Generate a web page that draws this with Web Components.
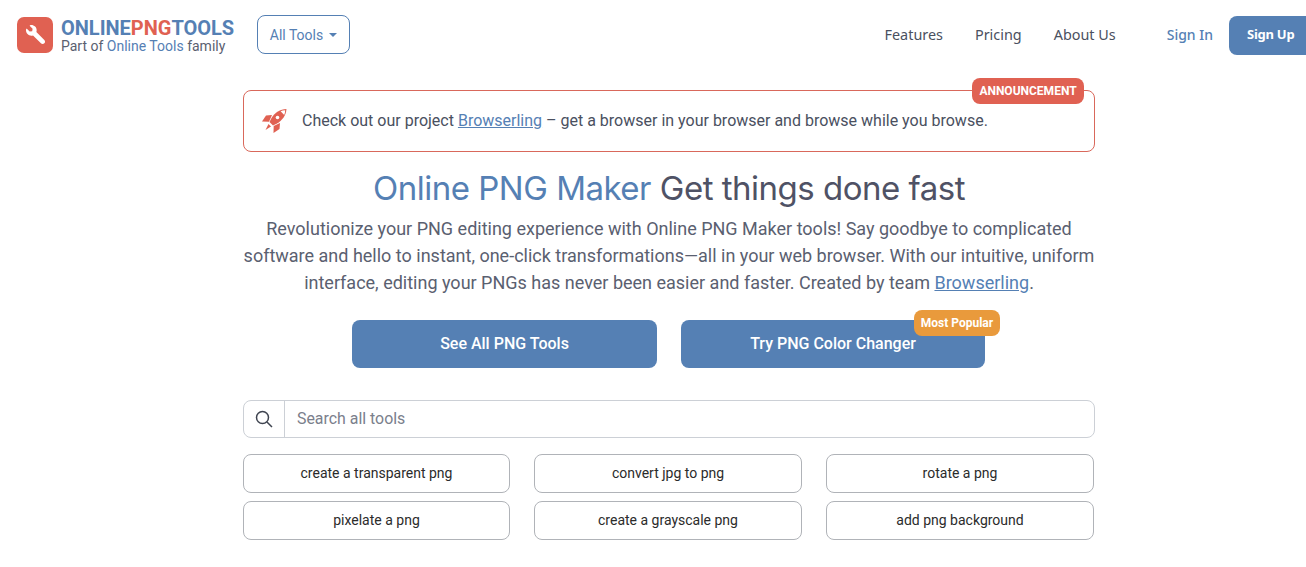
<!DOCTYPE html>
<html lang="en">
<head>
<meta charset="utf-8">
<title>Online PNG Maker</title>
<style>
  html, body { margin: 0; background: #fff; }
  body { font-family: Roboto, "Liberation Sans", sans-serif; color: #4a5060; }
</style>
</head>
<body>
<site-header></site-header>
<main-column>
  <announce-box></announce-box>
  <hero-text></hero-text>
  <hero-actions></hero-actions>
  <search-bar></search-bar>
  <tool-grid>
    <tool-link>create a transparent png</tool-link>
    <tool-link>convert jpg to png</tool-link>
    <tool-link>rotate a png</tool-link>
    <tool-link>pixelate a png</tool-link>
    <tool-link>create a grayscale png</tool-link>
    <tool-link>add png background</tool-link>
  </tool-grid>
</main-column>

<script>
  // small helper so each element only has to hand over its markup
  class Base extends HTMLElement {
    connectedCallback() {
      if (this.shadowRoot) return;
      this.attachShadow({ mode: 'open' }).innerHTML = this.markup();
    }
  }

  const WRENCH = 'M507.73 109.1c-2.24-9.03-13.54-12.09-20.12-5.51l-74.36 74.36-67.88-11.31-11.31-67.88 74.36-74.36c6.62-6.62 3.43-17.9-5.66-20.16-47.38-11.74-99.55.91-136.58 37.93-39.64 39.64-50.55 97.1-34.05 147.2L18.74 402.76c-24.99 24.99-24.99 65.51 0 90.5 24.99 24.99 65.51 24.99 90.5 0l213.21-213.21c50.12 16.71 107.47 5.68 147.37-34.22 37.07-37.07 49.7-89.32 37.91-136.73z';

  customElements.define('site-header', class extends Base {
    markup() {
      return `<style>
        :host { display: flex; align-items: center; height: 69px; padding-left: 17px; }
        .mark { width: 36px; height: 36px; border-radius: 7px; background: #e06152; display: flex; align-items: center; justify-content: center; flex: none; }
        .mark svg { width: 19px; height: 19px; fill: #fff; transform: scaleX(-1); }
        .brand { margin: 2px 0 0 8px; width: 196px; flex: none; }
        .name { font: 700 20px/20px Roboto, sans-serif; letter-spacing: -.02px; color: #5580b4; white-space: nowrap; }
        .name b { color: #e06152; font-weight: 700; }
        .sub { font: 14px/16px Roboto, sans-serif; color: #5a6070; white-space: nowrap; }
        .sub span { color: #5580b4; }
        .all { flex: none; box-sizing: border-box; width: 93px; height: 39px; border: 1px solid #5580b4; border-radius: 8px; color: #5580b4; font: 14px Roboto, sans-serif; display: flex; align-items: center; justify-content: center; gap: 6px; }
        .all i { width: 0; height: 0; border: 4px solid transparent; border-top-color: #5580b4; border-bottom: 0; margin-top: 1px; }
        nav { margin-left: auto; display: flex; align-items: center; font: 14.4px "Noto Sans", sans-serif; color: #4a5060; }
        nav a { margin: -1px 32px 0 0; }
        nav a.last { margin-right: 51px; }
        nav a.in { color: #5580b4; margin-right: 16px; font-size: 14px; font-weight: 500; }
        nav a.up { box-sizing: border-box; width: 77px; height: 39px; margin: 1px 0 0; background: #5580b4; color: #fff; font-weight: 700; font-size: 13px; letter-spacing: -.25px; border-radius: 8px 0 0 8px; display: flex; align-items: center; padding: 0 0 2px 18px; }
      </style>
      <div class="mark"><svg viewBox="0 0 512 512"><path d="${WRENCH}"/></svg></div>
      <div class="brand">
        <div class="name">ONLINE<b>PNG</b>TOOLS</div>
        <div class="sub">Part of <span>Online Tools</span> family</div>
      </div>
      <div class="all">All Tools <i></i></div>
      <nav>
        <a>Features</a><a>Pricing</a><a class="last">About Us</a><a class="in">Sign In</a><a class="up">Sign Up</a>
      </nav>`;
    }
  });

  customElements.define('main-column', class extends Base {
    markup() {
      return `<style>
        :host { display: flex; flex-direction: column; width: 852px; margin: 21px auto 0 243px; }
      </style><slot></slot>`;
    }
  });

  customElements.define('announce-box', class extends Base {
    markup() {
      return `<style>
        :host { display: flex; align-items: center; position: relative; box-sizing: border-box; height: 62px; border: 1px solid #d9685b; border-radius: 8px; padding: 0 0 2px 18px; font: 16px Roboto, sans-serif; color: #4a5060; }
        svg { width: 25px; height: 25px; flex: none; margin-right: 15px; fill: #e06152; }
        a { color: #5580b4; text-decoration: underline; }
        .tag { position: absolute; top: -13px; right: 10px; width: 112px; height: 26px; text-align: center; background: #e06152; color: #fff; border-radius: 8px; font: 700 12px/26px Roboto, sans-serif; }
      </style>
      <svg viewBox="0 0 25 25">
        <!-- body, nose cap left hollow -->
        <path d="M24.5 1C18 1 13 4.5 9.5 10L7.5 14l3.5 3.5 4-2C20.5 12 24 7.5 24.5 1z"/>
        <path fill="#fff" d="M23.2 2.3c-1.8 0-3.2.4-4.6 1l3.6 3.8c.6-1.5 1-3 1-4.8z"/>
        <circle cx="15.5" cy="9.5" r="1.8" fill="#fff"/>
        <!-- fins and tail -->
        <path d="M10 7 4 7.5 0 13.5l7 .2z"/>
        <path d="M18 15 17.5 21 11.5 25l.2-7z"/>
        <path d="M6.5 16l2.5 2.5-5.5 3.5z"/>
      </svg>
      <span>Check out our project <a href="#">Browserling</a> – get a browser in your browser and browse while you browse.</span>
      <div class="tag">ANNOUNCEMENT</div>`;
    }
  });

  customElements.define('hero-text', class extends Base {
    markup() {
      return `<style>
        :host { display: block; text-align: center; }
        h1 { margin: 16px 0 0; font: 400 33px/41px Inter, sans-serif; letter-spacing: -.5px; color: #4f5265; }
        h1 span { color: #5580b4; }
        p { margin: 6px 0 0; font: 18px/27px Roboto, sans-serif; color: #5a6070; }
        a { color: #5580b4; text-decoration: underline; }
      </style>
      <h1><span>Online PNG Maker</span> Get things done fast</h1>
      <p>Revolutionize your PNG editing experience with Online PNG Maker tools! Say goodbye to complicated software and hello to instant, one-click transformations—all in your web browser. With our intuitive, uniform interface, editing your PNGs has never been easier and faster. Created by team <a href="#">Browserling</a>.</p>`;
    }
  });

  customElements.define('hero-actions', class extends Base {
    markup() {
      return `<style>
        :host { display: flex; gap: 24px; margin: 24px 0 0 109px; }
        a { position: relative; box-sizing: border-box; width: 305px; height: 48px; background: #5580b4; color: #fff; border-radius: 8px; font: 500 16px/48px Roboto, sans-serif; text-align: center; }
        a + a { width: 304px; }
        .pop { position: absolute; top: -10px; right: -15px; width: 86px; height: 26px; background: #e99a3c; border-radius: 8px; font: 700 12px/26px Roboto, sans-serif; }
      </style>
      <a>See All PNG Tools</a>
      <a>Try PNG Color Changer<span class="pop">Most Popular</span></a>`;
    }
  });

  customElements.define('search-bar', class extends Base {
    markup() {
      return `<style>
        :host { display: flex; box-sizing: border-box; height: 38px; margin-top: 32px; border: 1px solid #ccd0d6; border-radius: 8px; }
        .ic { width: 40px; flex: none; display: flex; align-items: center; justify-content: center; border-right: 1px solid #ccd0d6; }
        svg { width: 18px; height: 18px; fill: none; stroke: #3f4450; stroke-width: 1.5; }
        input { flex: 1; border: 0; outline: 0; background: none; padding: 0 12px 2px; font: 15.9px Roboto, sans-serif; color: #4a5060; }
        input::placeholder { color: #7b808c; opacity: 1; }
      </style>
      <div class="ic"><svg viewBox="0 0 18 18"><circle cx="7.5" cy="7.5" r="6"/><path d="M12 12l5 5"/></svg></div>
      <input placeholder="Search all tools">`;
    }
  });

  customElements.define('tool-grid', class extends Base {
    markup() {
      return `<style>
        :host { display: grid; grid-template-columns: 267px 268px 268px; column-gap: 24px; row-gap: 8px; margin-top: 16px; }
      </style><slot></slot>`;
    }
  });

  customElements.define('tool-link', class extends Base {
    markup() {
      return `<style>
        :host { display: block; box-sizing: border-box; height: 39px; border: 1px solid #b0b3b8; border-radius: 8px; text-align: center; font: 14px/37px Roboto, sans-serif; color: #2b2b2b; }
      </style><slot></slot>`;
    }
  });
</script>
</body>
</html>
